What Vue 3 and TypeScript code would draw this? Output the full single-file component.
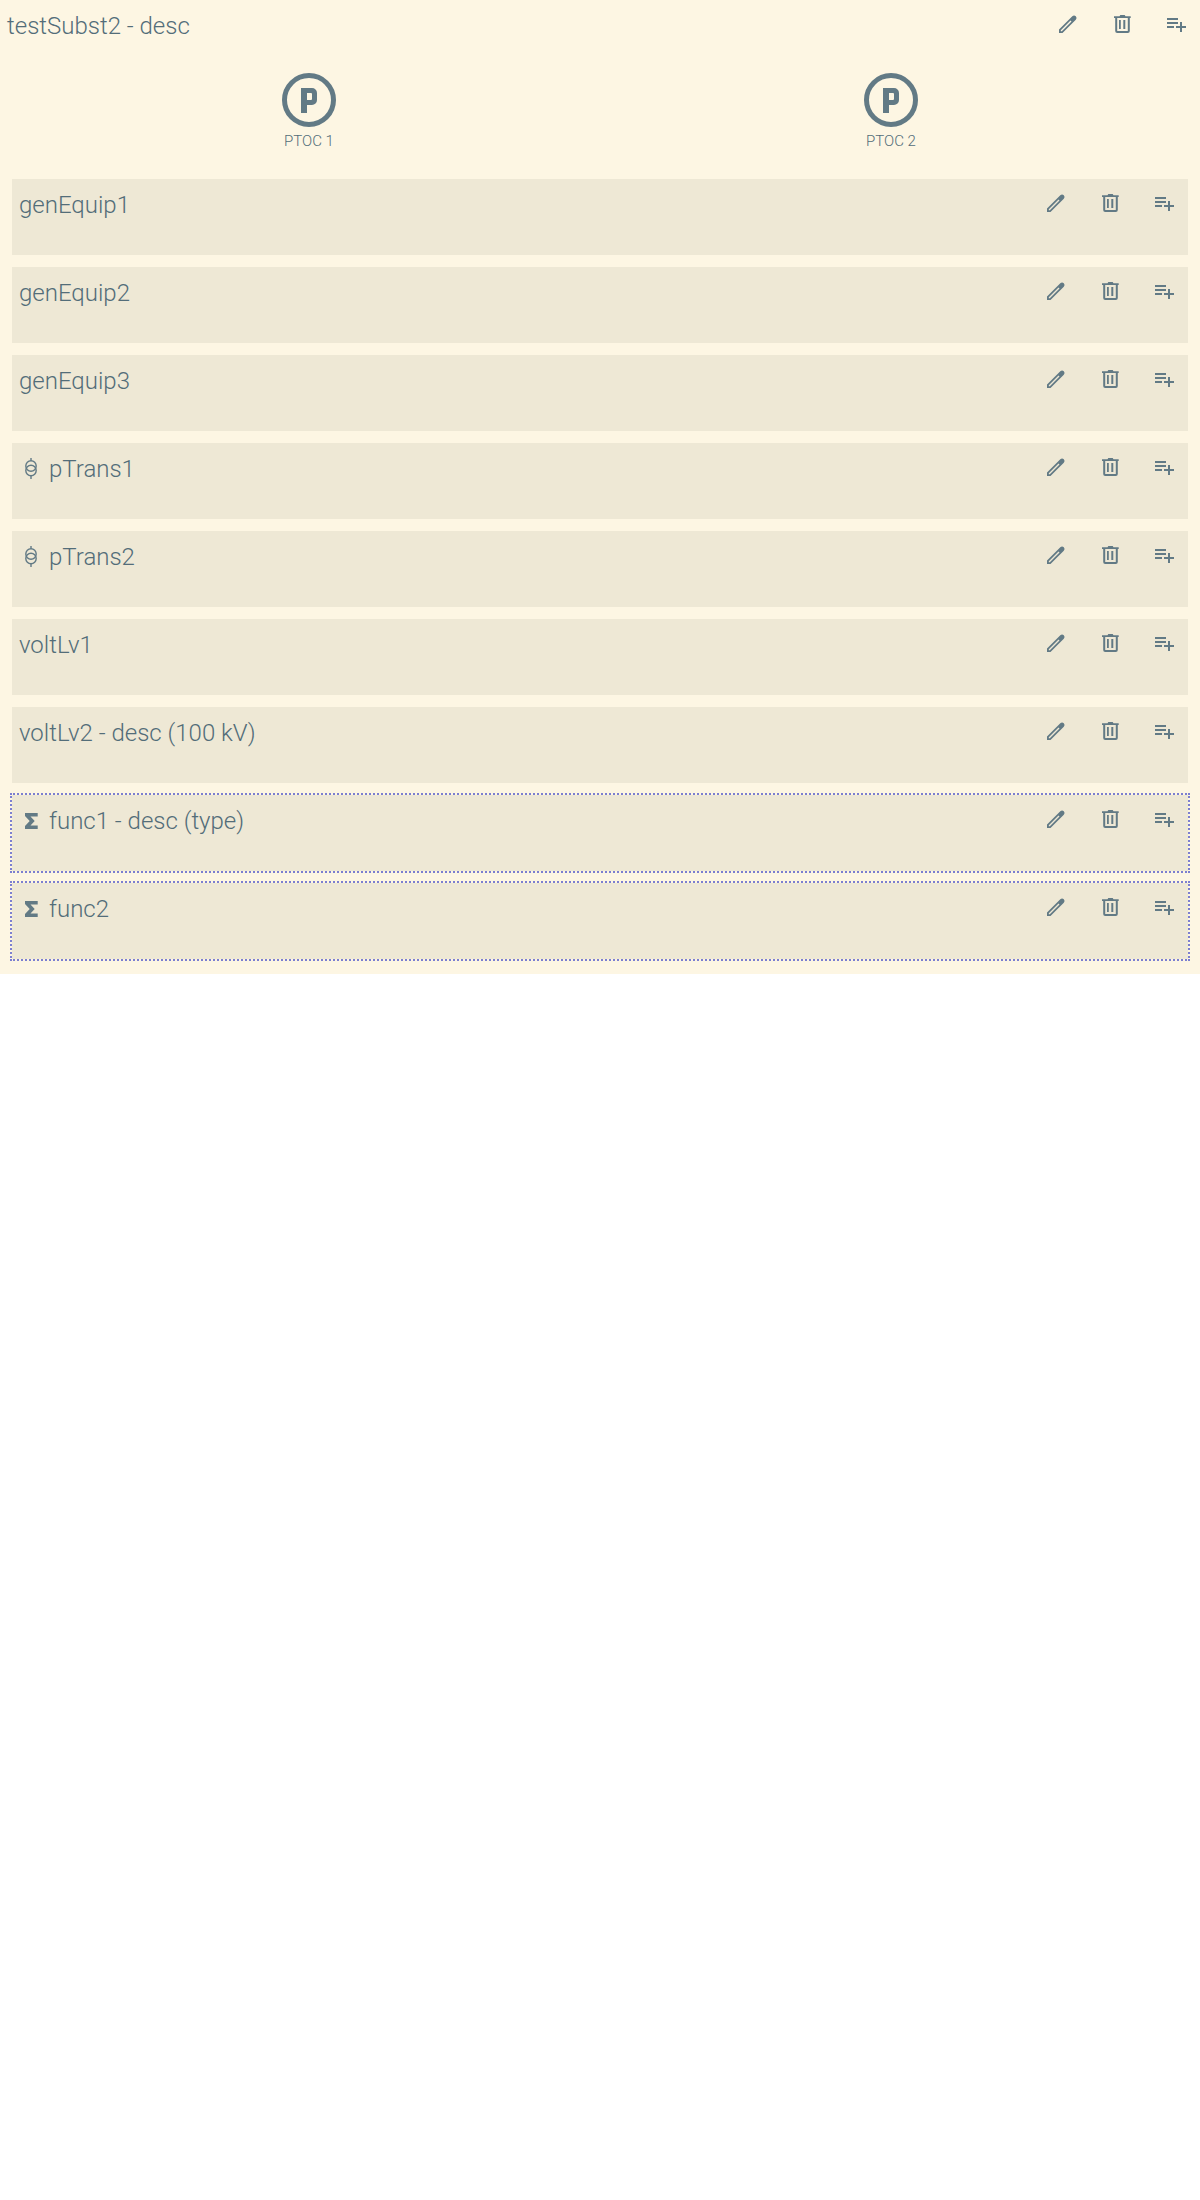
<script setup lang="ts">
interface Row { name: string; icon?: 'trans' | 'sigma'; dotted?: boolean }
const rows: Row[] = [
  { name: 'genEquip1' },
  { name: 'genEquip2' },
  { name: 'genEquip3' },
  { name: 'pTrans1', icon: 'trans' },
  { name: 'pTrans2', icon: 'trans' },
  { name: 'voltLv1' },
  { name: 'voltLv2 - desc (100 kV)' },
  { name: 'func1 - desc (type)', icon: 'sigma', dotted: true },
  { name: 'func2', icon: 'sigma', dotted: true },
]
const ptocs = ['PTOC 1', 'PTOC 2']
const actions = ['edit', 'del', 'add']
</script>

<template>
  <div class="page">
    <header class="head">
      <span class="title">testSubst2 - desc</span>
      <div class="actions">
        <span v-for="a in actions" :key="a" class="btn">
          <svg v-if="a==='edit'" viewBox="0 0 24 24" class="ico"><path d="M3 21v-3.500L16.300 4.200a2.600 2.600 0 0 1 3.500 0a2.600 2.600 0 0 1 0 3.500L6.500 21zM4.800 19.200h1L15.500 9.500l-1-1L4.800 18.200z" fill-rule="evenodd"/></svg>
          <svg v-else-if="a==='del'" viewBox="0 0 24 24" class="ico"><path d="M15.500 4.200H20.700v1.800h-.9v13a2 2 0 0 1-2 2H7.200a2 2 0 0 1-2-2V6H4V4.200h5.500l.8-1.200h4.400zM7.200 6v12.700c0 .2.100.3.300.3h10c.2 0 .3-.1.300-.3V6zM9 8h1.800v9H9zm4.300 0h2v9h-2z" fill-rule="evenodd"/></svg>
          <svg v-else viewBox="0 0 24 24" class="ico"><path d="M14 10H3v2h11zm0-4H3v2h11zm4 8v-4h-2v4h-4v2h4v4h2v-4h4v-2zM3 16h7v-2H3z"/></svg>
        </span>
      </div>
    </header>

    <div class="ptocs">
      <div v-for="p in ptocs" :key="p" class="ptoc">
        <svg viewBox="0 0 54 54" class="pico">
          <circle cx="27" cy="27" r="24.500" fill="none" stroke="currentColor" stroke-width="5"/>
          <path d="M19 15h11a5 5 0 0 1 5 5v7a5 5 0 0 1-5 5h-5v8h-6zM25 20v7h4a1 1 0 0 0 1-1v-5a1 1 0 0 0-1-1z" fill-rule="evenodd" fill="currentColor"/>
        </svg>
        <span class="plabel">{{ p }}</span>
      </div>
    </div>

    <section v-for="r in rows" :key="r.name" class="row" :class="{ dotted: r.dotted }">
      <div class="head">
        <span class="title">
          <svg v-if="r.icon==='trans'" viewBox="0 0 14 24" class="tico"><g fill="none" stroke="currentColor" stroke-width="1.400"><circle cx="7" cy="9" r="5.200"/><circle cx="7" cy="13.500" r="5.200"/><path d="M7 1v2.500M7 19v3"/></g></svg>
          <svg v-else-if="r.icon==='sigma'" viewBox="0 0 14 24" class="tico"><path d="M1 4h12.700v3.500H6.500l4.200 4.500-4.200 4.500h7.200V20H1v-3l4.700-5L1 7z" fill="currentColor"/></svg>
          <span>{{ r.name }}</span>
        </span>
        <div class="actions">
          <span v-for="a in actions" :key="a" class="btn">
            <svg v-if="a==='edit'" viewBox="0 0 24 24" class="ico"><path d="M3 21v-3.500L16.300 4.200a2.600 2.600 0 0 1 3.500 0a2.600 2.600 0 0 1 0 3.500L6.500 21zM4.800 19.200h1L15.500 9.500l-1-1L4.800 18.200z" fill-rule="evenodd"/></svg>
            <svg v-else-if="a==='del'" viewBox="0 0 24 24" class="ico"><path d="M15.500 4.200H20.700v1.800h-.9v13a2 2 0 0 1-2 2H7.200a2 2 0 0 1-2-2V6H4V4.200h5.500l.8-1.200h4.400zM7.200 6v12.700c0 .2.100.3.300.3h10c.2 0 .3-.1.300-.3V6zM9 8h1.800v9H9zm4.300 0h2v9h-2z" fill-rule="evenodd"/></svg>
            <svg v-else viewBox="0 0 24 24" class="ico"><path d="M14 10H3v2h11zm0-4H3v2h11zm4 8v-4h-2v4h-4v2h4v4h2v-4h4v-2zM3 16h7v-2H3z"/></svg>
          </span>
        </div>
      </div>
    </section>
  </div>
</template>

<style scoped>
.page {
  background: #fdf6e3;
  color: #627a85;
  font-family: Roboto, "Liberation Sans", sans-serif;
  font-weight: 300;
  padding-bottom: 3px;
  width: 1200px;
}
.head {
  display: flex;
  justify-content: space-between;
  height: 48px;
}
.title {
  display: flex;
  align-items: center;
  font-size: 24px;
  line-height: 48px;
  height: 48px;
  padding-left: 7px;
  margin-top: 2px;
  color: #536d79;
}
.actions {
  display: flex;
  gap: 6px;
}
.btn {
  width: 48px;
  height: 48px;
  display: flex;
  align-items: center;
  justify-content: center;
}
.ico {
  width: 24px;
  height: 24px;
  fill: currentColor;
}
.ptocs {
  display: grid;
  grid-template-columns: 1fr 1fr;
  height: 131px;
  padding: 0 18px;
}
.ptoc {
  display: flex;
  flex-direction: column;
  align-items: center;
  padding-top: 25px;
}
.pico {
  width: 54px;
  height: 54px;
  display: block;
}
.plabel {
  font-size: 15px;
  line-height: 17px;
  margin-top: 6px;
  color: #536d79;
}
.row {
  background: #eee8d5;
  margin: 0 12px 12px;
  height: 76px;
}
.row.dotted {
  outline: 2px dotted #7c7fd0;
}
.tico {
  width: 14px;
  height: 24px;
  margin: 0 11px 0 5px;
  flex: none;
  color: #627a85;
}
</style>

<style>
body { margin: 0; background: #fff; }
</style>
